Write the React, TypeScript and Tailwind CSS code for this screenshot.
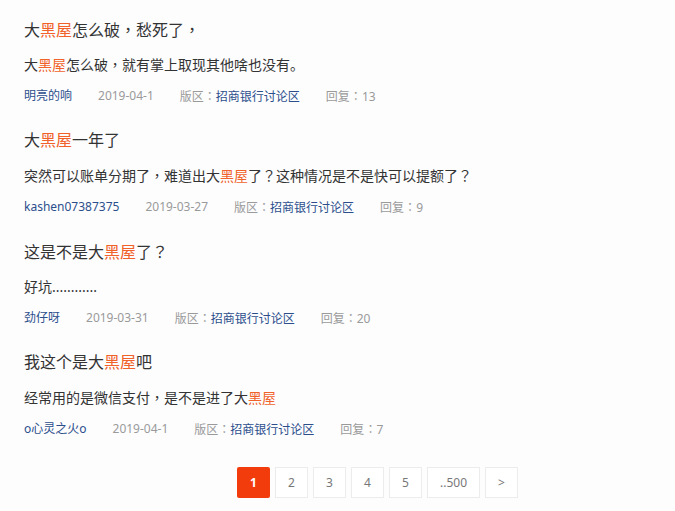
const items = [
  {
    title: ['大', '黑屋', '怎么破，愁死了，'],
    body: ['大', '黑屋', '怎么破，就有掌上取现其他啥也没有。'],
    user: '明亮的响',
    date: '2019-04-1',
    replies: 13,
  },
  {
    title: ['大', '黑屋', '一年了'],
    body: ['突然可以账单分期了，难道出大', '黑屋', '了？这种情况是不是快可以提额了？'],
    user: 'kashen07387375',
    date: '2019-03-27',
    replies: 9,
  },
  {
    title: ['这是不是大', '黑屋', '了？'],
    body: ['好坑............', '', ''],
    user: '劲仔呀',
    date: '2019-03-31',
    replies: 20,
  },
  {
    title: ['我这个是大', '黑屋', '吧'],
    body: ['经常用的是微信支付，是不是进了大', '黑屋', ''],
    user: 'o心灵之火o',
    date: '2019-04-1',
    replies: 7,
  },
];

const pages = ['1', '2', '3', '4', '5', '..500', '>'];

// centre the full-width punctuation like the original (TC font sets it centred)
function Punct({ text }: { text: string }) {
  return (
    <>
      {text.split(/([，？：])/).map((s, i) =>
        /^[，？：]$/.test(s) ? (
          <span key={i} className="[font-family:'Noto_Sans_CJK_TC',sans-serif]">
            {s}
          </span>
        ) : (
          s
        )
      )}
    </>
  );
}

function Marked({ parts }: { parts: string[] }) {
  return (
    <>
      <Punct text={parts[0]} />
      {parts[1] && <span className="text-[#f0622a]">{parts[1]}</span>}
      <Punct text={parts[2]} />
    </>
  );
}

export default function App() {
  return (
    <div
      className="w-[675px] h-[511px] bg-[#fdfdfe] overflow-hidden"
      style={{ fontFamily: '"Noto Sans", "Noto Sans CJK SC", sans-serif' }}
    >
      <div className="flex flex-col gap-[23px] pt-[17px] px-6">
        {items.map((item) => (
          <div key={item.user} className="flex flex-col gap-3">
            <div className="h-[24px] flex items-center text-[16px] text-[#333] whitespace-nowrap">
              <span>
                <Marked parts={item.title} />
              </span>
            </div>
            <div className="h-[22px] flex items-center text-[14px] text-[#333] whitespace-nowrap">
              <span>
                <Marked parts={item.body} />
              </span>
            </div>
            <div className="h-[18px] flex items-center gap-[26px] text-[12px] whitespace-nowrap">
              <span className="text-[#2c4f8c]">{item.user}</span>
              <span className="text-[#9a9a9a]">{item.date}</span>
              <span className="text-[#9a9a9a]">
                版区<Punct text="：" />
                <span className="text-[#2c4f8c]">招商银行讨论区</span>
              </span>
              <span className="text-[#9a9a9a]">
                回复<Punct text="：" />
                {item.replies}
              </span>
            </div>
          </div>
        ))}
      </div>

      {/* pagination */}
      <div className="flex gap-[5px] pl-[237px] mt-[29px]">
        {pages.map((p, i) => (
          <div
            key={p}
            className={
              i === 0
                ? 'w-[33px] h-[31px] flex items-center justify-center bg-[#f23c0c] text-white text-[12px] font-bold rounded-[2px]'
                : p === '..500'
                ? 'w-[53px] h-[31px] flex items-center justify-center border border-[#ececec] bg-white text-[#777] text-[12px]'
                : 'w-[33px] h-[31px] flex items-center justify-center border border-[#ececec] bg-white text-[#777] text-[12px]'
            }
          >
            {p}
          </div>
        ))}
      </div>
    </div>
  );
}
